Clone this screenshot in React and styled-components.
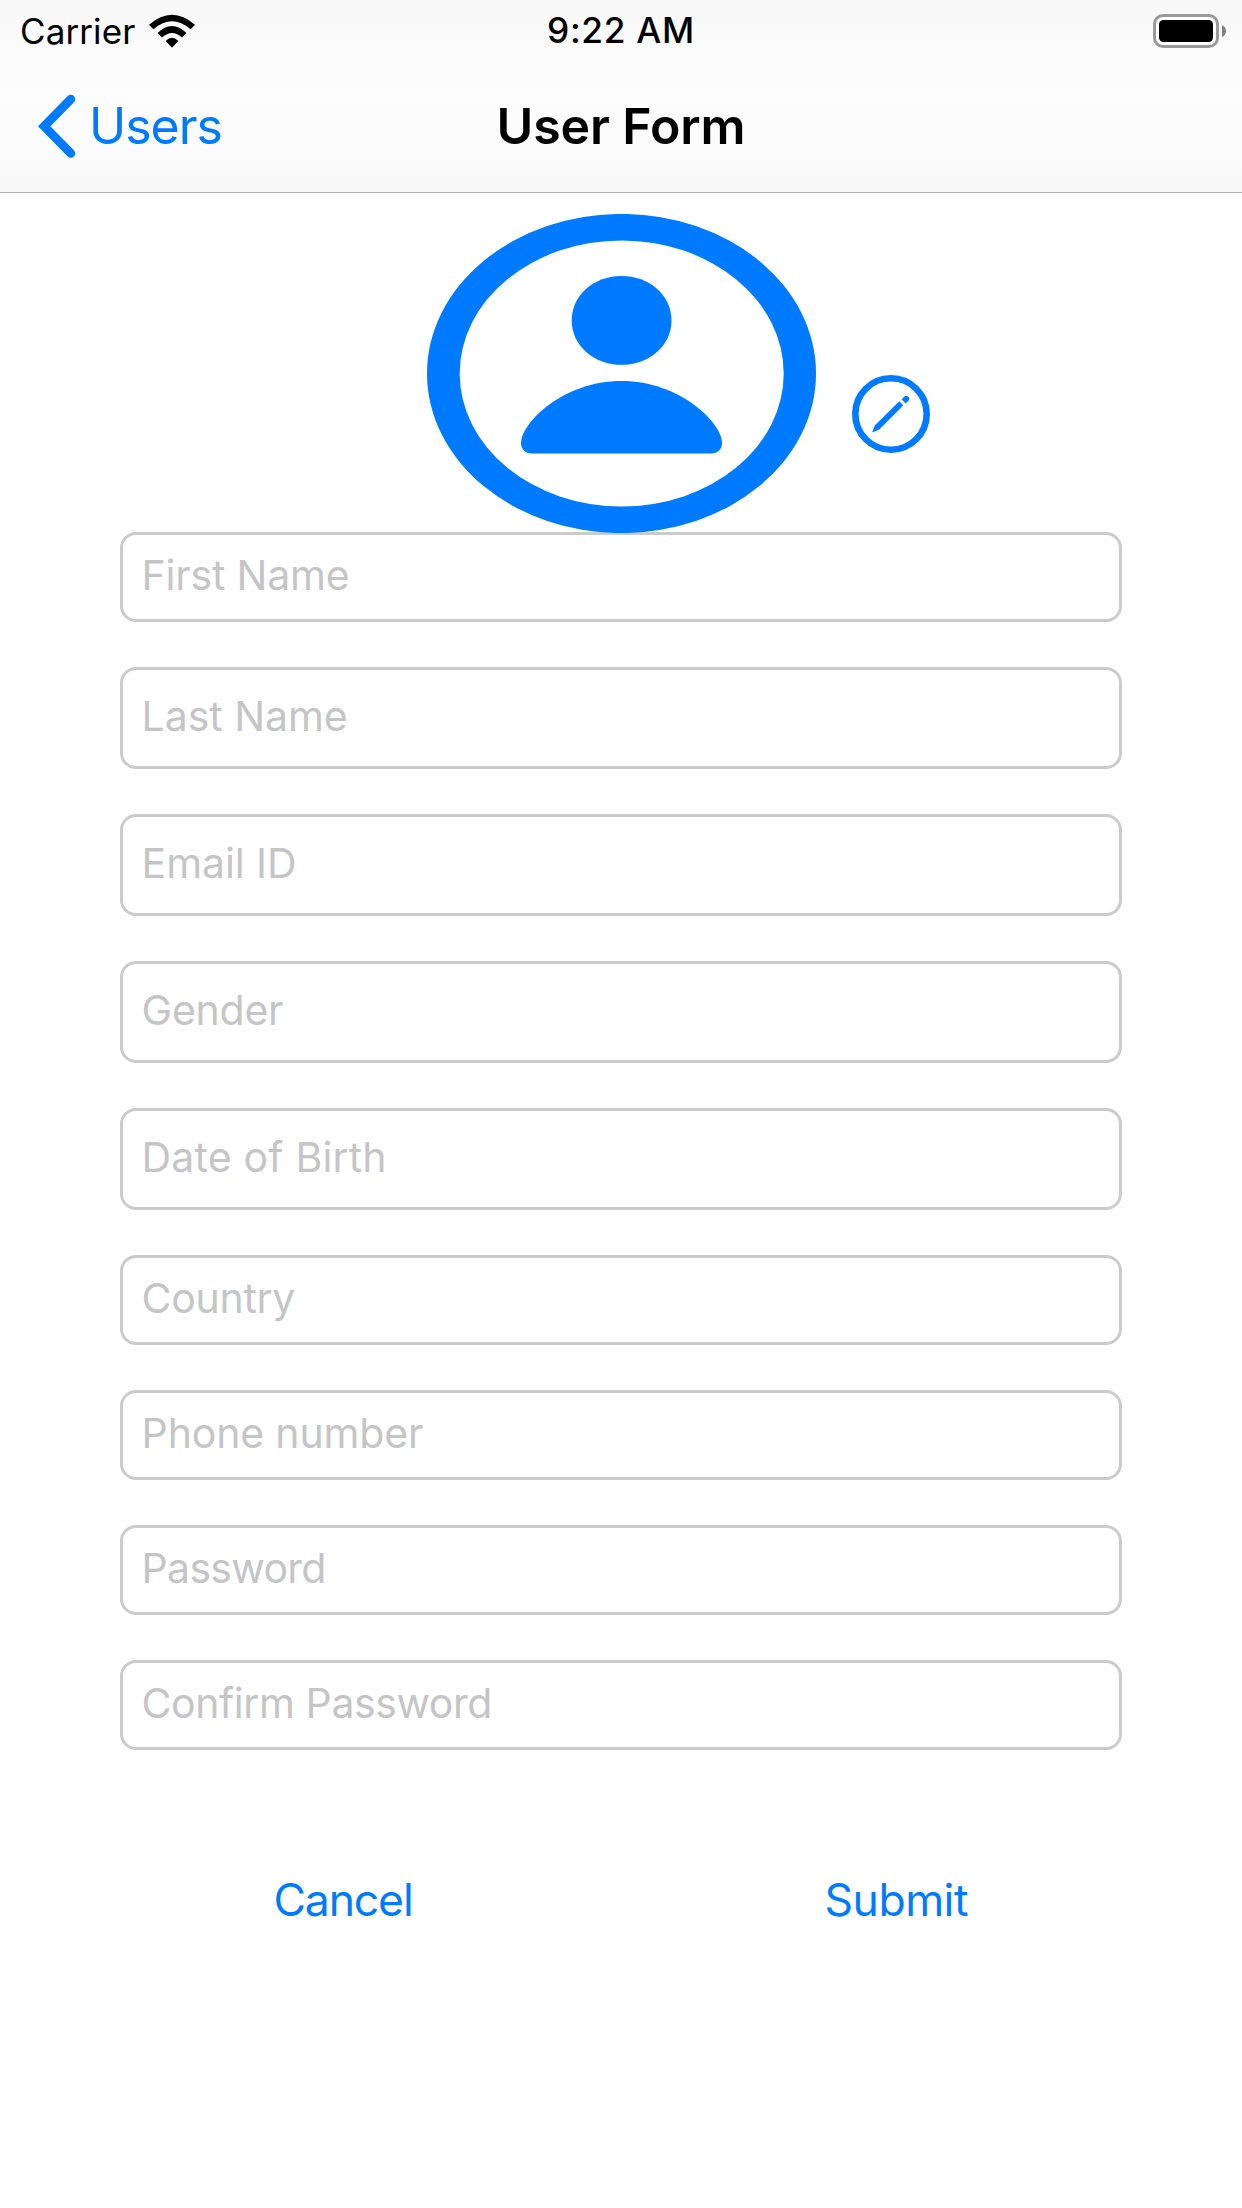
import React from "react";
import styled, { createGlobalStyle } from "styled-components";

const BLUE = "#007aff";

const GlobalStyle = createGlobalStyle`
  * { box-sizing: border-box; }
  body {
    margin: 0;
    background: #fff;
    font-family: Inter, "Liberation Sans", sans-serif;
  }
`;

const Screen = styled.div`
  width: 1242px;
  height: 2208px;
  display: flex;
  flex-direction: column;
  background: #fff;
  overflow: hidden;
`;

const Header = styled.header`
  height: 193px;
  flex: none;
  display: flex;
  flex-direction: column;
  border-bottom: 1px solid #b0b0b1;
  background: linear-gradient(#f8f8f8, #fcfcfc 36%, #fdfdfd 50%, #f9f9f9);
`;

const Bar = styled.div`
  height: ${(p) => p.$height}px;
  display: grid;
  grid-template-columns: 1fr auto 1fr;
  align-items: center;
  padding: 0 ${(p) => p.$inset}px;
`;

const Cluster = styled.div`
  display: flex;
  align-items: center;
  justify-content: ${(p) => (p.$end ? "flex-end" : "flex-start")};
  height: 100%;
  gap: ${(p) => p.$gap || 0}px;
  padding-left: ${(p) => p.$indent || 0}px;
`;

const Text = styled.span`
  font-size: ${(p) => p.$size}px;
  font-weight: ${(p) => p.$weight || 400};
  letter-spacing: ${(p) => p.$spacing || 0}px;
  color: ${(p) => p.$color || "#000"};
  line-height: 60px;
  white-space: nowrap;
`;

const Icon = styled.svg`
  display: block;
  flex: none;
`;

const AvatarRow = styled.div`
  position: relative;
  z-index: 1;
  display: flex;
  align-items: flex-end;
  gap: 36px;
  height: 319px;
  margin: 21px 0 -1px;
  padding-left: 427px;
`;

const EditButton = styled.button`
  display: flex;
  border: 0;
  padding: 0;
  margin-bottom: 80px;
  background: none;
`;

const Form = styled.form`
  display: flex;
  flex-direction: column;
  gap: 45px;
  padding: 0 120px;
`;

const Field = styled.div`
  height: ${(p) => (p.$tall ? 102 : 90)}px;
  display: flex;
  align-items: center;
  padding: 0 0 4px 18.6px;
  border: 3px solid #cbcbcb;
  border-radius: 16px;
  background: #fff;
`;

const Actions = styled.div`
  display: flex;
  gap: 412px;
  padding: 120px 0 0 273.5px;
`;

const Action = styled.button`
  border: 0;
  padding: 0;
  background: none;
  font-family: inherit;
  display: flex;
`;

const FIELDS = [
  { label: "First Name", spacing: -0.2 },
  { label: "Last Name", tall: true, spacing: -0.05 },
  { label: "Email ID", tall: true, spacing: -0.1 },
  { label: "Gender", tall: true, spacing: -0.25 },
  { label: "Date of Birth", tall: true, spacing: 0.18 },
  { label: "Country", spacing: -0.3 },
  { label: "Phone number", spacing: -0.15 },
  { label: "Password", spacing: -0.7 },
  { label: "Confirm Password", spacing: -0.42 },
];

const Wifi = () => (
  <Icon width="46" height="34" viewBox="149 12.5 46 34">
    <path d="M149 23.2 Q172 3.2 195 23.2 L190.6 27.8 Q172 11.8 153.4 27.8Z" />
    <path d="M157.6 31.6 Q172 17.6 186.4 31.6 L182 36 Q172 27 162 36Z" />
    <path d="M165.7 39.6 Q172 33 178.3 39.6 L172 46.2Z" />
  </Icon>
);

const Battery = () => (
  <Icon width="74" height="34" viewBox="0 0 74 34">
    <rect x="1.5" y="1.5" width="63" height="31" rx="8.5" fill="#fff" stroke="#999" strokeWidth="3" />
    <rect x="6" y="6" width="54" height="22" rx="4.5" />
    <path d="M69 11 Q73 13 73 17 T69 23Z" fill="#808080" />
  </Icon>
);

const Chevron = () => (
  <Icon width="38" height="64" viewBox="38 94 38 64">
    <path
      d="M70.8 99.2 L44.2 126.3 L70.8 153.4"
      fill="none"
      stroke={BLUE}
      strokeWidth="8.8"
      strokeLinecap="round"
      strokeLinejoin="miter"
    />
  </Icon>
);

const Avatar = () => (
  <Icon width="389" height="319" viewBox="427 214 389 319">
    <g fill={BLUE}>
      <path
        fillRule="evenodd"
        d="M427 373.5a194.5 159.5 0 1 0 389 0a194.5 159.5 0 1 0-389 0Z M459.7 373.5a162 133 0 1 0 324 0a162 133 0 1 0-324 0Z"
      />
      <path d="M571.7 320.4 C571.7 295 594 276 621.6 276 S671.5 295 671.5 320.4 S649 364.8 621.6 364.8 S571.7 345.8 571.7 320.4Z" />
      <path d="M532 453.5 C525 453.5 521 449 521 443 C521 423 563 381 621.5 381 C680 381 722 423 722 443 C722 449 718 453.5 711 453.5Z" />
    </g>
  </Icon>
);

const Pencil = () => (
  <Icon width="78" height="78" viewBox="852 375 78 78">
    <circle cx="891" cy="414" r="35.7" fill="none" stroke={BLUE} strokeWidth="6.6" />
    <g fill={BLUE}>
      <path d="M872.6 432 L875 425.6 L899.2 401.6 L903 405.4 L879 429.4Z" stroke={BLUE} strokeWidth="0.6" strokeLinejoin="round" />
      <path d="M901.6 399.6 L904.4 396.6 Q906 395 908 396.6 Q910.2 398.8 908.6 400.6 L905.6 403.6Z" />
    </g>
  </Icon>
);

export default function App() {
  return (
    <>
      <GlobalStyle />
      <Screen>
        <Header>
          <Bar $height={61} $inset={15}>
            <Cluster $gap={13.5} $indent={5}>
              <Text $size={35} $spacing={0.1}>Carrier</Text>
              <Wifi />
            </Cluster>
            <Text $size={35.3} $weight={500} $spacing={0.7}>9:22 AM</Text>
            <Cluster $end>
              <Battery />
            </Cluster>
          </Bar>
          <Bar $height={130} $inset={38}>
            <Cluster $gap={13}>
              <Chevron />
              <Text $size={50} $color={BLUE} $spacing={-1}>Users</Text>
            </Cluster>
            <Text $size={50} $weight={600} $spacing={-0.1}>User Form</Text>
          </Bar>
        </Header>
        <AvatarRow>
          <Avatar />
          <EditButton type="button" aria-label="Edit photo">
            <Pencil />
          </EditButton>
        </AvatarRow>
        <Form>
          {FIELDS.map((f) => (
            <Field key={f.label} $tall={f.tall}>
              <Text $size={41} $color="#c5c5c7" $spacing={f.spacing}>{f.label}</Text>
            </Field>
          ))}
        </Form>
        <Actions>
          <Action type="button">
            <Text $size={44.5} $color={BLUE} $spacing={-1.15}>Cancel</Text>
          </Action>
          <Action type="button">
            <Text $size={44.5} $color={BLUE} $spacing={-0.5}>Submit</Text>
          </Action>
        </Actions>
      </Screen>
    </>
  );
}
